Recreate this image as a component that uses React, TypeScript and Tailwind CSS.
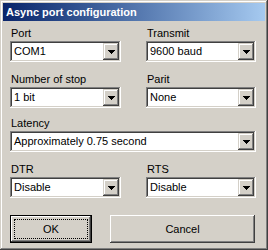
import React from "react";

const font = { fontFamily: '"Liberation Sans", Arial, sans-serif' };

function Arrow() {
  return (
    <svg width="7" height="4" viewBox="0 0 7 4" shapeRendering="crispEdges">
      <path d="M0 0h7v1H0zM1 1h5v1H1zM2 2h3v1H2zM3 3h1v1H3z" fill="#000" />
    </svg>
  );
}

function Combo({ value }: { value: string }) {
  return (
    <div className="flex h-[21px] bg-white p-[2px] shadow-[inset_-1px_-1px_#fff,inset_1px_1px_#808080,inset_-2px_-2px_#D4D0C8,inset_2px_2px_#404040]">
      <div className="flex flex-1 items-center pl-[2px] text-[11px] leading-none text-black">{value}</div>
      <div className="flex h-full w-[16px] items-center justify-center bg-[#D4D0C8] shadow-[inset_-1px_-1px_#404040,inset_1px_1px_#D4D0C8,inset_-2px_-2px_#808080,inset_2px_2px_#fff]">
        <Arrow />
      </div>
    </div>
  );
}

function Field({ label, value }: { label: string; value: string }) {
  return (
    <div className="flex flex-col">
      <div className="h-[13px] pl-[1px] text-[11px] leading-[13px] text-black">{label}</div>
      <div className="mt-[1px]">
        <Combo value={value} />
      </div>
    </div>
  );
}

export default function App() {
  return (
    <div style={font} className="h-[250px] w-[268px] bg-[#D4D0C8] p-[3px] shadow-[inset_-1px_-1px_#404040,inset_1px_1px_#D4D0C8,inset_-2px_-2px_#808080,inset_2px_2px_#fff]">
      <div className="flex h-[18px] items-center bg-gradient-to-r from-[#0A246A] to-[#A6CAF0] pl-[3px] text-[11px] font-bold text-white">
        Async port configuration
      </div>

      <div className="flex flex-col pl-[7px] pr-[9px] pt-[6px]">
        <div className="grid grid-cols-[111px_110px] gap-x-[25px]">
          <Field label="Port" value="COM1" />
          <Field label="Transmit" value="9600 baud" />
        </div>
        <div className="mt-[11px] grid grid-cols-[111px_110px] gap-x-[25px]">
          <Field label="Number of stop" value="1 bit" />
          <Field label="Parit" value="None" />
        </div>
        <div className="mt-[9px]">
          <Field label="Latency" value="Approximately 0.75 second" />
        </div>
        <div className="mt-[11px] grid grid-cols-[111px_110px] gap-x-[25px]">
          <Field label="DTR" value="Disable" />
          <Field label="RTS" value="Disable" />
        </div>

        <div className="mt-[17px] flex gap-x-[18px]">
          <button className="h-[28px] w-[82px] border border-black bg-[#D4D0C8] p-[3px] text-[11px] text-black shadow-[inset_-1px_-1px_#404040,inset_1px_1px_#fff,inset_-2px_-2px_#808080]">
            <span className="flex h-full w-full items-center justify-center border border-dotted border-black">OK</span>
          </button>
          <button className="flex h-[28px] w-[145px] items-center justify-center bg-[#D4D0C8] text-[11px] text-black shadow-[inset_-1px_-1px_#404040,inset_1px_1px_#fff,inset_-2px_-2px_#808080]">
            Cancel
          </button>
        </div>
      </div>
    </div>
  );
}
